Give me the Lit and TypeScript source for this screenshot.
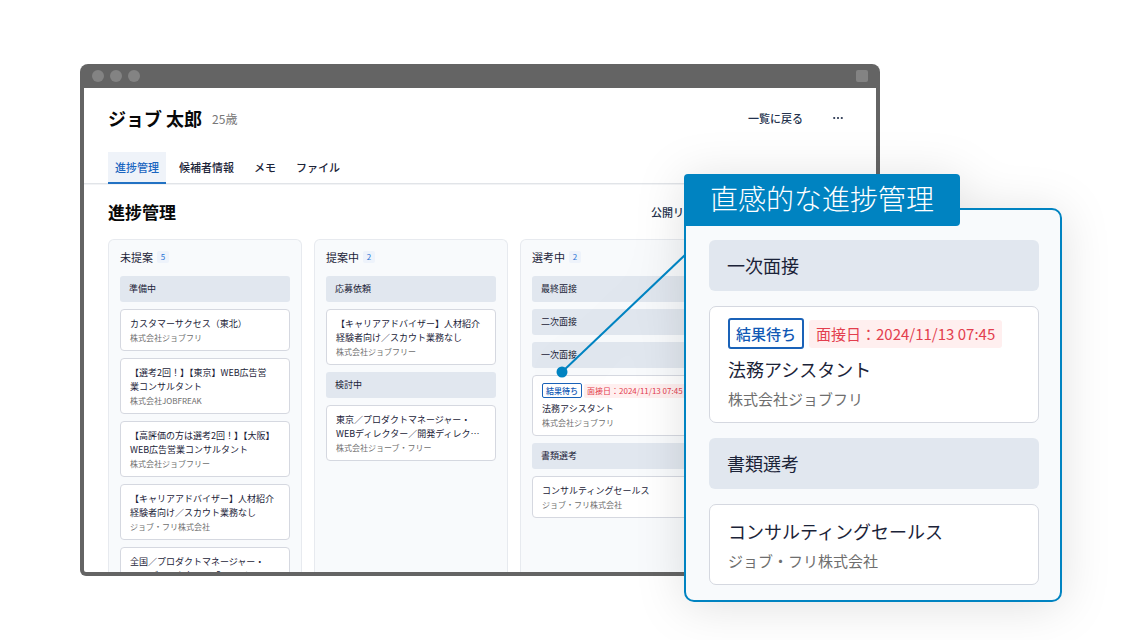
import { LitElement, html, css, nothing } from "lit";
import { customElement, property } from "lit/decorators.js";

interface Card {
  kind: "card";
  title: string;
  company: string;
  status?: string;
  date?: string;
}
interface Group {
  kind: "group";
  title: string;
}
type Entry = Card | Group;

interface Column {
  title: string;
  count: number;
  entries: Entry[];
}

const group = (title: string): Group => ({ kind: "group", title });
const card = (title: string, company: string, status?: string, date?: string): Card => ({
  kind: "card",
  title,
  company,
  status,
  date,
});

const assistant = card("法務アシスタント", "株式会社ジョブフリ", "結果待ち", "面接日：2024/11/13 07:45");
const sales = card("コンサルティングセールス", "ジョブ・フリ株式会社");

const columns: Column[] = [
  {
    title: "未提案",
    count: 5,
    entries: [
      group("準備中"),
      card("カスタマーサクセス（東北）", "株式会社ジョブフリ"),
      card("【選考2回！】【東京】WEB広告営\n業コンサルタント", "株式会社JOBFREAK"),
      card("【高評価の方は選考2回！】【大阪】\nWEB広告営業コンサルタント", "株式会社ジョブフリー"),
      card("【キャリアアドバイザー】人材紹介\n経験者向け／スカウト業務なし", "ジョブ・フリ株式会社"),
      card("全国／プロダクトマネージャー・\nWEBディレクター／「HRtech…", ""),
    ],
  },
  {
    title: "提案中",
    count: 2,
    entries: [
      group("応募依頼"),
      card("【キャリアアドバイザー】人材紹介\n経験者向け／スカウト業務なし", "株式会社ジョブフリー"),
      group("検討中"),
      card("東京／プロダクトマネージャー・\nWEBディレクター／開発ディレク…", "株式会社ジョーブ・フリー"),
    ],
  },
  {
    title: "選考中",
    count: 2,
    entries: [
      group("最終面接"),
      group("二次面接"),
      group("一次面接"),
      assistant,
      group("書類選考"),
      sales,
    ],
  },
];

@customElement("entry-list")
export class EntryList extends LitElement {
  @property({ attribute: false }) entries: Entry[] = [];

  static styles = css`
    :host {
      display: flex;
      flex-direction: column;
      gap: 7px;
      color: #1b2338;
    }
    :host([large]) {
      gap: 15px;
    }
    .group {
      margin: 0;
      padding: 0 9px;
      border-radius: 3px;
      background: #e1e7ef;
      font-size: 9px;
      font-weight: 400;
      line-height: 26px;
    }
    :host([large]) .group {
      padding: 0 18px;
      border-radius: 6px;
      font-size: 18px;
      line-height: 51px;
    }
    .card {
      padding: 7px 0 5px 9px;
      border: 1px solid #d5d8e0;
      border-radius: 4px;
      background: #fff;
    }
    :host([large]) .card {
      padding: 11px 0 8px 18px;
      border-radius: 7px;
    }
    .title,
    .company {
      margin: 0;
      min-height: 14px;
      font-size: 9px;
      line-height: 14px;
      white-space: pre;
    }
    .company {
      color: #6e6e6e;
      font-size: 8px;
    }
    :host([large]) .title {
      font-size: 18px;
      line-height: 30px;
    }
    :host([large]) .company {
      font-size: 15px;
      line-height: 30px;
    }
    .tags {
      display: flex;
      align-items: center;
      gap: 2px;
      margin-bottom: 4px;
      font-size: 8px;
      white-space: nowrap;
    }
    :host([large]) .tags {
      gap: 5px;
      margin-bottom: 5px;
      font-size: 15px;
    }
    .status {
      padding: 0 3px;
      border: 1px solid #1a62b8;
      border-radius: 2px;
      color: #1259b5;
      font-weight: 500;
      line-height: 13px;
    }
    :host([large]) .status {
      padding: 0 6px;
      border-width: 2px;
      border-radius: 3px;
      line-height: 27px;
    }
    .date {
      padding: 0 3px;
      border-radius: 2px;
      background: #ffefef;
      color: #e33e4e;
      line-height: 14px;
    }
    :host([large]) .date {
      padding: 0 7px;
      border-radius: 3px;
      line-height: 28px;
    }
  `;

  render() {
    return this.entries.map((e) =>
      e.kind === "group"
        ? html`<h4 class="group">${e.title}</h4>`
        : html`<article class="card">
            ${e.status
              ? html`<div class="tags">
                  <span class="status">${e.status}</span><span class="date">${e.date}</span>
                </div>`
              : nothing}
            <p class="title">${e.title}</p>
            <p class="company">${e.company}</p>
          </article>`,
    );
  }
}

@customElement("app-root")
export class AppRoot extends LitElement {
  static styles = css`
    :host {
      display: block;
      font-family: "Noto Sans CJK JP", "Noto Sans", sans-serif;
      color: #1b2338;
    }
    * {
      box-sizing: border-box;
    }
    .stage {
      position: relative;
      min-height: 100vh;
      padding: 64px 260px 64px 80px;
      background: #fff;
      overflow: hidden;
    }
    .window {
      display: flex;
      flex-direction: column;
      height: calc(100vh - 128px);
      min-height: 512px;
      padding: 0 4px 4px;
      border-radius: 8px 8px 6px 6px;
      background: #646464;
    }
    .chrome {
      display: flex;
      flex: none;
      align-items: center;
      gap: 6px;
      height: 24px;
      padding: 0 8px;
    }
    .dot {
      width: 12px;
      height: 12px;
      border-radius: 50%;
      background: #838383;
    }
    .square {
      margin-left: auto;
      border-radius: 2px;
    }
    .page {
      display: flex;
      flex: 1;
      flex-direction: column;
      min-height: 0;
      border-radius: 0 0 2px 2px;
      background: #fff;
      overflow: hidden;
    }
    .person {
      display: flex;
      flex: none;
      align-items: center;
      padding: 16px 24px 20px;
    }
    .name {
      margin: 0 10px 0 0;
      color: #080808;
      font-size: 18px;
      font-weight: 700;
      line-height: 28px;
    }
    .age {
      color: #777;
      font-size: 12px;
    }
    .back,
    .more,
    .share,
    .tab {
      padding: 0;
      border: 0;
      background: none;
      color: #24324d;
      font-family: inherit;
      font-size: 11px;
      font-weight: 500;
      line-height: 16px;
      text-decoration: none;
    }
    .back {
      margin: 0 21px 0 auto;
    }
    .more {
      display: flex;
      justify-content: center;
      width: 28px;
    }
    .tabs {
      display: flex;
      flex: none;
      gap: 6px;
      height: 32px;
      padding: 0 24px;
      box-shadow: inset 0 -1px #e1e4e8, 0 1px #f2f3f5;
    }
    .tab {
      height: 32px;
      padding: 0 7px;
      border-bottom: 2px solid transparent;
      color: #1b2338;
      line-height: 30px;
    }
    .active {
      border-color: #2272c3;
      background: #eff3f9;
      color: #1a65c0;
    }
    .heading {
      display: flex;
      flex: none;
      align-items: center;
      justify-content: space-between;
      padding: 15px 192px 14px 24px;
    }
    .section {
      margin: 0;
      color: #080808;
      font-size: 17px;
      font-weight: 700;
      line-height: 26px;
    }
    .board {
      display: grid;
      flex: 1;
      grid-auto-columns: 194px;
      grid-auto-flow: column;
      gap: 12px;
      min-height: 0;
      padding: 0 24px;
    }
    .column {
      padding: 9px 11px;
      border: 1px solid #e7eaef;
      border-bottom: 0;
      border-radius: 6px 6px 0 0;
      background: #f8fafc;
      min-height: 0;
    }
    .column-head {
      display: flex;
      align-items: center;
      gap: 4px;
      margin-bottom: 11px;
    }
    .column-title {
      margin: 0;
      font-size: 11px;
      font-weight: 400;
      line-height: 16px;
    }
    .count {
      width: 12px;
      border-radius: 2px;
      background: #eef3fb;
      color: #2672d4;
      font-size: 8px;
      line-height: 12px;
      text-align: center;
    }
    .callout {
      position: absolute;
      top: 174px;
      right: 78px;
      width: 378px;
      filter: drop-shadow(0 4px 24px rgba(0, 0, 0, 0.12));
    }
    .connector {
      position: absolute;
      top: 76px;
      right: 376px;
    }
    .panel {
      margin-top: 34px;
      padding: 30px 21px 15px 23px;
      border: 2px solid #0083c1;
      border-radius: 10px;
      background: #f8fafc;
    }
    .banner {
      position: absolute;
      top: 0;
      left: 0;
      margin: 0;
      padding: 0 26px 4px;
      border-radius: 4px 4px 4px 0;
      background: #0083c1;
      color: #fff;
      font-size: 28px;
      font-weight: 300;
      line-height: 48px;
      white-space: nowrap;
    }
  `;

  render() {
    return html`
      <main class="stage" lang="ja">
        <section class="window">
          <div class="chrome">
            <span class="dot"></span><span class="dot"></span><span class="dot"></span>
            <span class="dot square"></span>
          </div>
          <div class="page">
            <header class="person">
              <h1 class="name">ジョブ 太郎</h1>
              <span class="age">25歳</span>
              <a class="back" href="#">一覧に戻る</a>
              <button class="more" aria-label="メニュー">
                <svg width="10" height="4" viewBox="0 0 10 4" fill="#24324d">
                  <circle cx="1.2" cy="2" r="1.1" />
                  <circle cx="5" cy="2" r="1.1" />
                  <circle cx="8.8" cy="2" r="1.1" />
                </svg>
              </button>
            </header>
            <nav class="tabs">
              <a class="tab active" href="#">進捗管理</a>
              <a class="tab" href="#">候補者情報</a>
              <a class="tab" href="#">メモ</a>
              <a class="tab" href="#">ファイル</a>
            </nav>
            <div class="heading">
              <h2 class="section">進捗管理</h2>
              <button class="share">公開リ</button>
            </div>
            <div class="board">
              ${columns.map(
                (c) => html`<section class="column">
                  <header class="column-head">
                    <h3 class="column-title">${c.title}</h3>
                    <span class="count">${c.count}</span>
                  </header>
                  <entry-list .entries=${c.entries}></entry-list>
                </section>`,
              )}
            </div>
          </div>
        </section>
        <aside class="callout">
          <svg class="connector" width="130" height="130" viewBox="0 0 130 130">
            <path d="M6 122 130 4" stroke="#0083c1" stroke-width="2" />
            <circle cx="6" cy="122" r="5.5" fill="#0083c1" />
          </svg>
          <div class="panel">
            <entry-list
              large
              .entries=${[group("一次面接"), assistant, group("書類選考"), sales]}
            ></entry-list>
          </div>
          <h2 class="banner">直感的な進捗管理</h2>
        </aside>
      </main>
    `;
  }
}
